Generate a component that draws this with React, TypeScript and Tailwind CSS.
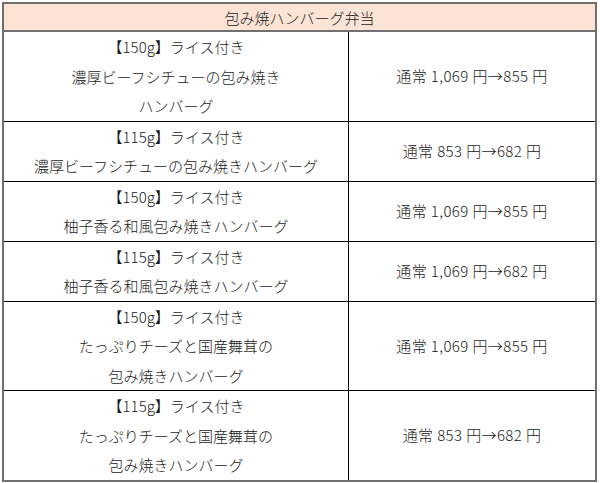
const rows = [
  { name: ['【150g】ライス付き', '濃厚ビーフシチューの包み焼き', 'ハンバーグ'], price: '通常 1,069 円→855 円' },
  { name: ['【115g】ライス付き', '濃厚ビーフシチューの包み焼きハンバーグ'], price: '通常 853 円→682 円' },
  { name: ['【150g】ライス付き', '柚子香る和風包み焼きハンバーグ'], price: '通常 1,069 円→855 円' },
  { name: ['【115g】ライス付き', '柚子香る和風包み焼きハンバーグ'], price: '通常 1,069 円→682 円' },
  { name: ['【150g】ライス付き', 'たっぷりチーズと国産舞茸の', '包み焼きハンバーグ'], price: '通常 1,069 円→855 円' },
  { name: ['【115g】ライス付き', 'たっぷりチーズと国産舞茸の', '包み焼きハンバーグ'], price: '通常 853 円→682 円' },
];

const App = () => {
  return (
    <div className="w-[600px] h-[483px] bg-white pt-[2px] pl-[2px] font-['Noto_Sans_CJK_JP',sans-serif] font-light text-[15px] text-[#1a1a1a]">
      <div className="w-[595px] border-2 border-[#707070]">
        {/* Header */}
        <div className="h-[28px] leading-[28px] text-center bg-[#fbe4d5] border-b-2 border-[#707070]">
          包み焼ハンバーグ弁当
        </div>

        {/* Rows */}
        {rows.map((row, i) => (
          <div
            key={i}
            className={`grid grid-cols-[345px_1fr] ${i > 0 ? 'border-t border-black' : ''}`}
          >
            <div className="border-r border-black text-center">
              {row.name.map((line, j) => (
                <div key={j} className="leading-[29.5px]">
                  {line}
                </div>
              ))}
            </div>
            <div className="flex items-center justify-center tracking-[0.4px]">{row.price}</div>
          </div>
        ))}
      </div>
    </div>
  );
};

export default App;
